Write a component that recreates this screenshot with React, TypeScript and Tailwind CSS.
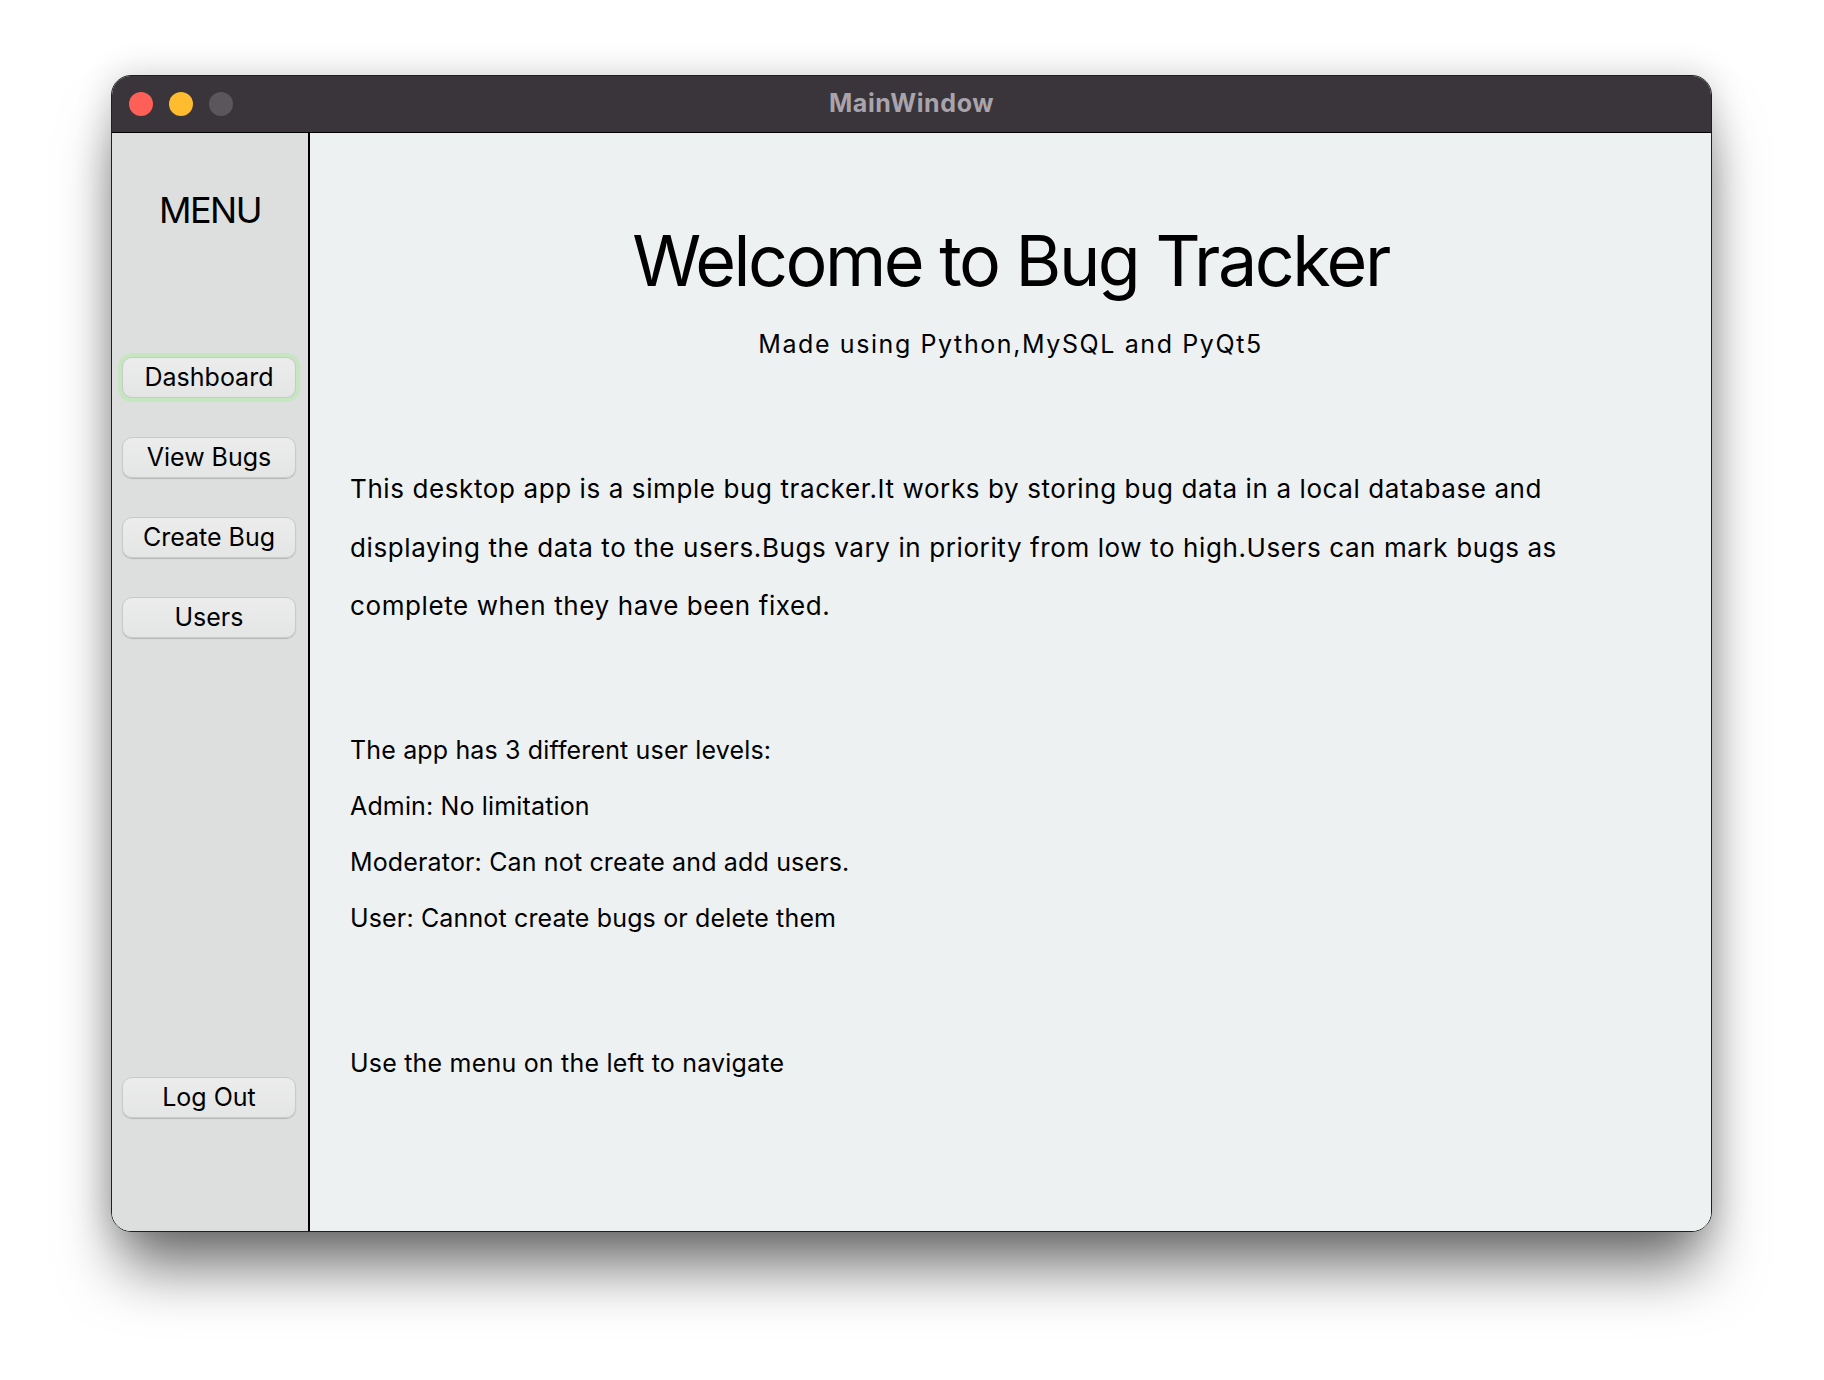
const font = { fontFamily: 'Inter, "Liberation Sans", sans-serif' };

const menuItems = ['Dashboard', 'View Bugs', 'Create Bug', 'Users'];

function MenuButton({ label, focused }: { label: string; focused?: boolean }) {
  return (
    <button
      className={
        'w-[174px] h-[41px] rounded-[10px] border border-[#c9c9c9] bg-gradient-to-b from-[#ececec] to-[#e4e5e5] text-[25px] leading-none text-black shadow-[0_1px_1px_rgba(0,0,0,0.18)] ' +
        (focused ? 'ring-[4px] ring-[#c5e6bf]' : '')
      }
    >
      {label}
    </button>
  );
}

export default function App() {
  return (
    <div className="w-full h-[1380px] bg-white pl-[111px] pt-[75px]" style={font}>
      <div className="w-[1601px] h-[1157px] rounded-[20px] border border-[#202020] overflow-hidden flex flex-col shadow-[0_45px_60px_-10px_rgba(0,0,0,0.55),0_0_35px_rgba(0,0,0,0.18)]">
        {/* title bar */}
        <div className="relative h-[57px] shrink-0 bg-[#3a353b] border-b border-black flex items-center">
          <div className="flex gap-[16px] pl-[17px]">
            <span className="w-[24px] h-[24px] rounded-full bg-[#fe5f57]" />
            <span className="w-[24px] h-[24px] rounded-full bg-[#febc2e]" />
            <span className="w-[24px] h-[24px] rounded-full bg-[#5b565c]" />
          </div>
          <div className="absolute inset-0 flex items-center justify-center text-[25px] font-bold tracking-[0.6px] text-[#a9a4ab]">
            MainWindow
          </div>
        </div>

        <div className="flex flex-1">
          {/* sidebar */}
          <aside className="w-[198px] shrink-0 bg-[#dddfdf] border-r-2 border-black flex flex-col">
            <div className="mt-[59px] text-center text-[36px] leading-none tracking-[-1.5px] text-black">MENU</div>
            <div className="mt-[129px] pl-[10px] flex flex-col gap-[39px]">
              {menuItems.map((m, i) => (
                <MenuButton key={m} label={m} focused={i === 0} />
              ))}
            </div>
            <div className="mt-[439px] pl-[10px]">
              <MenuButton label="Log Out" />
            </div>
          </aside>

          {/* main */}
          <main className="flex-1 bg-[#eef1f2] text-black">
            <h1 className="mt-[93px] text-center text-[70px] leading-none font-normal tracking-[-2.5px]">Welcome to Bug Tracker</h1>
            <p className="mt-[33px] text-center text-[25px] leading-[30px] tracking-[1.6px]">Made using Python,MySQL and PyQt5</p>

            <div className="mt-[101px] pl-[40px] text-[26px] leading-[58.5px] tracking-[0.6px]">
              <div>This desktop app is a simple bug tracker.It works by storing bug data in a local database and</div>
              <div>displaying the data to the users.Bugs vary in priority from low to high.Users can mark bugs as</div>
              <div>complete when they have been fixed.</div>
            </div>

            <div className="mt-[86px] pl-[40px] text-[25px] leading-[56px] tracking-[0.15px]">
              <div>The app has 3 different user levels:</div>
              <div>Admin: No limitation</div>
              <div>Moderator: Can not create and add users.</div>
              <div>User: Cannot create bugs or delete them</div>
            </div>

            <div className="mt-[89px] pl-[40px] text-[25px] leading-[56px] tracking-[0.2px]">Use the menu on the left to navigate</div>
          </main>
        </div>
      </div>
    </div>
  );
}
